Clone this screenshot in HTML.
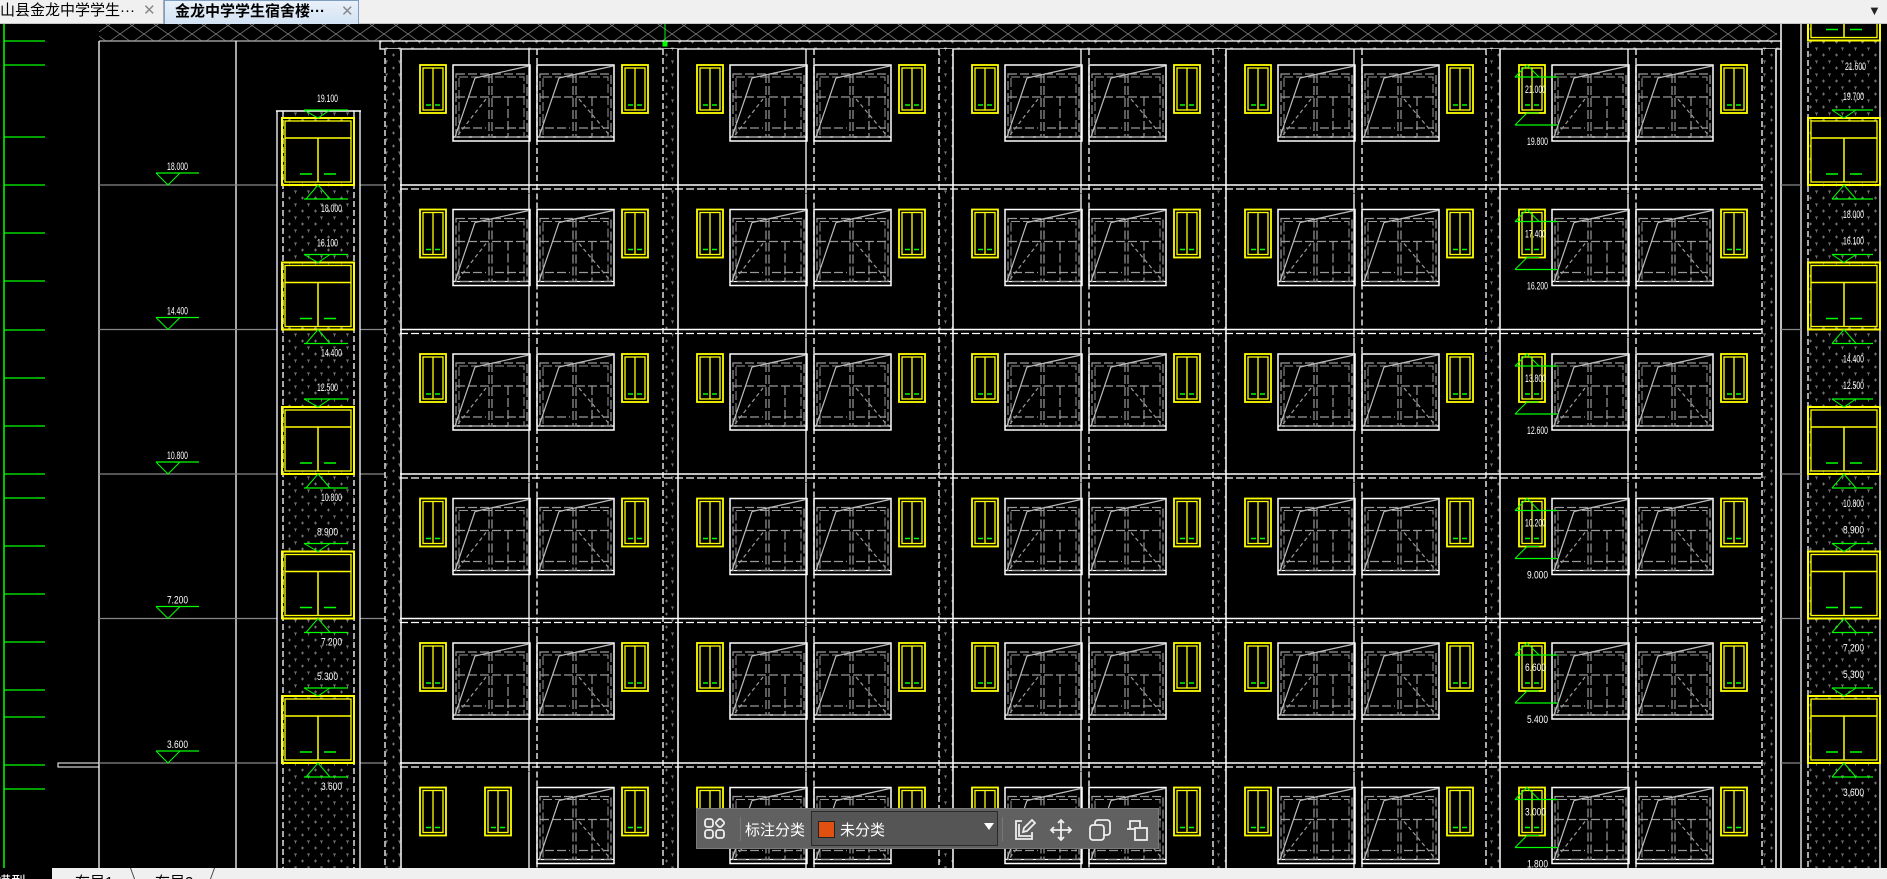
<!DOCTYPE html>
<html><head><meta charset="utf-8">
<style>
html,body{margin:0;padding:0;width:1887px;height:879px;overflow:hidden;background:#000;font-family:"Liberation Sans","Noto Sans CJK SC",sans-serif;}
#top{position:absolute;left:0;top:0;width:1887px;height:24px;background:#f0f0f0;border-bottom:1px solid #c8c8c8;box-sizing:border-box}
.tab{position:absolute;top:0;height:24px;font-size:15px;line-height:22px;white-space:nowrap;box-sizing:border-box}
.x{color:#888;font-size:15px}
#cv{position:absolute;left:0;top:24px}
#bot{position:absolute;left:0;top:868px;width:1887px;height:11px;background:#f0f0f0;overflow:hidden}
#tb{position:absolute;left:696px;top:808px;width:463px;height:41px;background:#606060;border:1px solid #7a7a7a;box-sizing:border-box;color:#fff;font-size:15px}
</style></head><body>
<div id="top">
 <div class="tab" style="left:0;width:164px;border-right:1px solid #aaa;padding-left:0">山县金龙中学学生··· <span class="x" style="position:absolute;left:143px">✕</span></div>
 <div class="tab" style="left:164px;width:195px;background:linear-gradient(#eaf1fa,#d3e2f3);border:1px solid #7f9dc4;border-bottom:none;padding-left:10px;font-weight:bold">金龙中学学生宿舍楼··· <span class="x" style="position:absolute;left:176px;font-weight:normal">✕</span></div>
 <div style="position:absolute;left:1868px;top:3px;font-size:13px;color:#222">▼</div>
</div>
<svg id="cv" width="1887" height="844" viewBox="0 24 1887 844"></svg>
<div id="tb">
 <svg style="position:absolute;left:7px;top:9px" width="22" height="22" viewBox="0 0 22 22" fill="none" stroke="#eee" stroke-width="1.8"><rect x="1" y="1" width="8" height="8" rx="2.5"/><rect x="1" y="12" width="8" height="8" rx="2.5"/><rect x="12" y="12" width="8" height="8" rx="2.5"/><rect x="12.5" y="1.5" width="7" height="7" rx="2" transform="rotate(45 16 5)"/></svg>
 <div style="position:absolute;left:43px;top:8px;width:1px;height:24px;background:#777"></div>
 <div style="position:absolute;left:48px;top:10px">标注分类</div>
 <div style="position:absolute;left:114px;top:2px;width:187px;height:35px;background:#555;border:1px solid #2a2a2a;box-sizing:border-box">
  <div style="position:absolute;left:6px;top:9px;width:15px;height:15px;background:#e05010;border:1px solid #222"></div>
  <div style="position:absolute;left:28px;top:7px">未分类</div>
  <div style="position:absolute;left:172px;top:11px;width:0;height:0;border-left:5px solid transparent;border-right:5px solid transparent;border-top:7px solid #fff"></div>
 </div>
 <div style="position:absolute;left:305px;top:8px;width:1px;height:24px;background:#777"></div>
 <svg style="position:absolute;left:316px;top:9px" width="24" height="24" viewBox="0 0 24 24" fill="none" stroke="#eee" stroke-width="1.8"><path d="M9 3H3v18h16v-7"/><path d="M6 6v12h12"/><path d="M10 14l1-4 8-8 3 3-8 8z"/></svg>
 <svg style="position:absolute;left:352px;top:9px" width="24" height="24" viewBox="0 0 24 24" fill="none" stroke="#eee" stroke-width="1.8"><path d="M12 2v20M2 12h20M9 5l3-3 3 3M9 19l3 3 3-3M5 9l-3 3 3 3M19 9l3 3-3 3"/></svg>
 <svg style="position:absolute;left:391px;top:9px" width="24" height="24" viewBox="0 0 24 24" fill="none" stroke="#eee" stroke-width="1.8"><rect x="2" y="7" width="14" height="15" rx="3"/><path d="M7 7V5a3 3 0 0 1 3-3h9a3 3 0 0 1 3 3v9a3 3 0 0 1-3 3h-3"/></svg>
 <svg style="position:absolute;left:428px;top:9px" width="24" height="24" viewBox="0 0 24 24" fill="none" stroke="#eee" stroke-width="1.8"><path d="M5 11V3h10v6"/><rect x="10" y="10" width="12" height="12"/><path d="M2 11h8"/></svg>
</div>
<div id="bot">
 <div style="position:absolute;left:0;top:0;width:52px;height:11px;background:#000"></div>
 <div style="position:absolute;left:-4px;top:3px;color:#fff;font-size:15px">模型</div>
 <div style="position:absolute;left:75px;top:3px;color:#000;font-size:15px">布局1</div>
 <div style="position:absolute;left:155px;top:3px;color:#000;font-size:15px">布局2</div>
 <div style="position:absolute;left:132px;top:0;width:1px;height:11px;background:#444;transform:skewX(20deg)"></div>
 <div style="position:absolute;left:212px;top:0;width:1px;height:11px;background:#444;transform:skewX(-20deg)"></div>
</div>
<script>
var s=[];
function L(x1,y1,x2,y2,c,w,d){s.push('<line x1="'+x1+'" y1="'+y1+'" x2="'+x2+'" y2="'+y2+'" stroke="'+c+'" stroke-width="'+(w||1.3)+'"'+(d?' stroke-dasharray="'+d+'"':'')+'/>');}
function R(x,y,w,h,c,sw,f,d){s.push('<rect x="'+x+'" y="'+y+'" width="'+w+'" height="'+h+'" stroke="'+c+'" stroke-width="'+(sw||1.3)+'" fill="'+(f||'none')+'"'+(d?' stroke-dasharray="'+d+'"':'')+'/>');}
function T(x,y,t,c){s.push('<text x="'+x+'" y="'+y+'" fill="'+(c||'#fff')+'" font-size="11" font-family="Liberation Sans Narrow,Liberation Sans,sans-serif" textLength="21" lengthAdjust="spacingAndGlyphs">'+t+'</text>');}
s.push('<defs><pattern id="dt" width="13" height="13" patternUnits="userSpaceOnUse"><rect width="13" height="13" fill="#000"/><path d="M2 3h3M3.5 1.5v3M8 9h3M9.5 9v2.5" stroke="#777" stroke-width="0.9"/></pattern><pattern id="xx" width="24" height="17" patternUnits="userSpaceOnUse"><rect width="24" height="17" fill="#000"/><path d="M0 0L24 17M24 0L0 17" stroke="#777" stroke-width="0.8"/></pattern></defs>');
var G='#0f0',Y='#ff0',W='#fff',g='#999';
R(99,24,1678,17,'none',0,'url(#xx)');
L(99,41,380,41,'#999',1.5);
R(380,41,1401,8,W,1.3,'url(#dt)');
L(4,24,4,868,G,1.5);
[41,65,137,185,233,281,330,378,426,474,498,546,594,642,690,717,765,789].forEach(function(y){L(4,y,45,y,G,1.3)});
L(99,41,99,868,W,1.3);L(236,41,236,868,W,1.3);
R(58,763,41,4,W,1);
var lab=['18.000','14.400','10.800','7.200','3.600'];
for(var k=0;k<5;k++){var y=185+144.5*k;L(99,y,277,y,'#888',1.3);L(360,y,385,y,'#888',1.3);
 L(156,y-12,199,y-12,G,1.3);s.push('<path d="M156 '+(y-12)+'L168 '+y+'L180 '+(y-12)+'" stroke="'+G+'" fill="none" stroke-width="1"/>');T(167,y-15,lab[k]);}
R(283,111,71,757,'none',0,'url(#dt)');
L(276,111,361,111,W,1.5);
[277,283,354,360].forEach(function(x){L(x,111,x,868,W,1.3,(x==283||x==354)?'6,3':null)});
function door(x,y){R(x,y,72,67,Y,2);R(x+3,y+3,66,61,Y,1.3,'#000');L(x+3,y+20,x+69,y+20,Y,1.5);L(x+36,y+20,x+36,y+64,Y,1.5);L(x+18,y+56,x+30,y+56,G,1.5);L(x+42,y+56,x+54,y+56,G,1.5);}
var up=['19.100','16.100','12.500','8.900','5.300'],dn=['18.000','14.400','10.800','7.200','3.600'];
for(k=0;k<5;k++){var y=118+144.5*k;door(282,y);
 L(304,y-8,348,y-8,G,1.3);s.push('<path d="M304 '+(y-8)+'L318 '+y+'L330 '+(y-8)+'" stroke="'+G+'" fill="none"/>');T(317,y-16,up[k]);
 L(304,y+81,348,y+81,G,1.3);s.push('<path d="M306 '+(y+81)+'L318 '+(y+67)+'L330 '+(y+81)+'" stroke="'+G+'" fill="none"/>');T(321,y+94,dn[k]);}
[[385,401],[663,678],[939,953],[1213,1226],[1486,1500],[1762,1776]].forEach(function(p){R(p[0],49,p[1]-p[0],819,'none',0,'url(#dt)');L(p[0],49,p[0],868,W,1.3,'6,3');L(p[1],49,p[1],868,W,1.5);});
L(1781,24,1781,868,W,1.5);
function yw(x,y,gr){R(x,y,26,48,Y,1.8);R(x+3,y+3,20,42,Y,1.3);L(x+13,y+3,x+13,y+45,Y,1.3);L(x+6,y+40,x+11,y+40,G,1.5);L(x+15,y+40,x+20,y+40,G,1.5);}
function bw(x,y,m){R(x,y,77,76,W,1.5);L(x,y+72,x+77,y+72,W,1.3);
 R(x+3,y+9,71,63,g,1.2,'none','9,3');R(x+6,y+12,65,60,g,1,'none','9,3');
 L(x+36,y+9,x+36,y+72,g,1.2,'9,3');L(x+39,y+9,x+39,y+72,g,1.2,'9,3');
 L(x+3,y+32,x+74,y+32,g,1.2,'9,3');L(x+55,y+32,x+55,y+72,g,1.2,'9,3');L(x+42,y+63,x+72,y+63,g,1.2,'9,3');L(x+8,y+63,x+33,y+63,g,1.2,'9,3');
 L(x+2,y+72,x+22,y+13,'#bbb',1.2);L(x+22,y+13,x+76,y+1,'#bbb',1.2);
 if(m)L(x+42,y+34,x+74,y+72,g,1.2,'4,3');else L(x+5,y+70,x+33,y+34,g,1.2,'4,3');}
var B=[401,678,953,1226,1500];
for(var f=0;f<6;f++){var F=49+144.5*f,wy=F+16;
 if(f<5){L(400,F+136,1762,F+136,W,1.5);L(400,F+140,1762,F+140,W,1.2,'8,3');}
 B.forEach(function(b,i){L(b+128,F,b+128,F+144,W,1.3);L(b+136,F,b+136,F+144,W,1.3,'6,3');
  if(f==5&&i==0){yw(b+19,wy);yw(b+84,wy);bw(b+136,wy,1);yw(b+221,wy);}
  else{yw(b+19,wy);bw(b+52,wy,0);bw(b+136,wy,1);yw(b+221,wy);}});
}
var m5=[['21.000','19.800'],['17.400','16.200'],['13.800','12.600'],['10.200','9.000'],['6.600','5.400'],['3.000','1.800']];
for(f=0;f<6;f++){var y=65+144.5*f;L(1515,y+12,1558,y+12,G,1.2);s.push('<path d="M1515 '+(y+12)+'L1527 '+y+'L1539 '+(y+12)+'" stroke="'+G+'" fill="none"/>');
 L(1515,y+60,1558,y+60,G,1.2);s.push('<path d="M1515 '+(y+60)+'L1527 '+(y+48)+'L1539 '+(y+48)+'" stroke="'+G+'" fill="none"/>');
 T(1525,y+28,m5[f][0]);T(1527,y+80,m5[f][1]);}
R(1808,24,72,844,'none',0,'url(#dt)');
[1801,1808,1880].forEach(function(x){L(x,24,x,868,W,1.3,x==1808?'6,3':null)});
var ru=['19.700','16.100','12.500','8.900','5.300'],rd=['18.000','14.400','10.800','7.200','3.600'];
door(1808,-26.5);T(1845,70,'21.600');
for(k=0;k<5;k++){var y=118+144.5*k;door(1808,y);L(1781,y+67,1801,y+67,'#888',1.3);
 L(1832,y-8,1873,y-8,G,1.3);s.push('<path d="M1832 '+(y-8)+'L1844 '+y+'L1856 '+(y-8)+'" stroke="'+G+'" fill="none"/>');T(1843,y-18,ru[k]);
 L(1832,y+81,1873,y+81,G,1.3);s.push('<path d="M1832 '+(y+81)+'L1844 '+(y+67)+'L1856 '+(y+81)+'" stroke="'+G+'" fill="none"/>');T(1843,y+100,rd[k]);}
L(665,24,665,43,G,1);R(663,42,4,4,G,1,G);
document.getElementById('cv').innerHTML=s.join('');
</script>
</body></html>
